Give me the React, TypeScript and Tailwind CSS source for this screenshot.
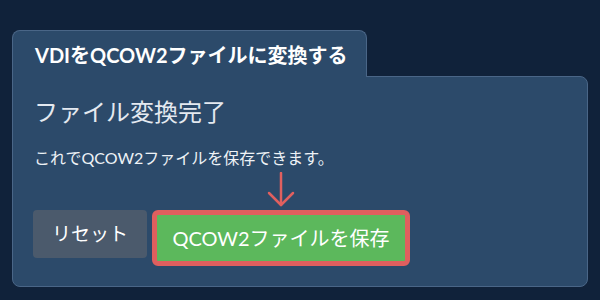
import React from "react";

const font = { fontFamily: 'Lato, "Noto Sans CJK JP", sans-serif' };

// Small red arrow pointing at the save button
function DownArrow() {
    return (
        <svg width="30" height="36" viewBox="0 0 30 36" fill="none">
            <path d="M15 1 V33" stroke="#e0605f" strokeWidth="2.5" strokeLinecap="round" />
            <path d="M3 21 L15 33 L27 21" stroke="#e0605f" strokeWidth="2.5" strokeLinecap="round" strokeLinejoin="round" />
        </svg>
    );
}

export default function App() {
    return (
        <div className="w-[600px] h-[300px] bg-[#10223a] pt-[30px] pl-[12px]" style={font}>
            <div className="w-[576px] flex flex-col">
                {/* Tab */}
                <div className="relative z-10 -mb-px w-[355px] h-[47px] rounded-t-lg border border-b-0 border-[#4a6687] bg-[#2c4a6a] pl-[22px] pt-[11px]">
                    <span className="text-[20px] font-bold text-white leading-[26px]">VDIをQCOW2ファイルに変換する</span>
                </div>

                {/* Panel */}
                <div className="h-[211px] rounded-b-lg rounded-tr-lg border border-[#4a6687] bg-[#2c4a6a] px-[20px] pt-[19px]">
                    <h2 className="pl-[1px] text-[24px] leading-[32px] font-normal text-[#e4e9f0]">ファイル変換完了</h2>
                    <p className="mt-[19px] pl-[1px] text-[16px] leading-[22px] text-[#eef2f6]">
                        これでQCOW2ファイルを保存できます。
                    </p>
                    <div className="mt-[41px] flex items-start gap-[5px]">
                        <button className="w-[114px] h-[48px] rounded bg-[#4b5a6c] text-[19px] text-white">
                            リセット
                        </button>
                        <div className="relative">
                            <div className="absolute left-1/2 -translate-x-1/2 -top-[38px]">
                                <DownArrow />
                            </div>
                            <button className="w-[258px] h-[56px] rounded-md border-[5px] border-[#df5f5e] bg-[#5cb85c] text-[20px] text-white">
                                QCOW2ファイルを保存
                            </button>
                        </div>
                    </div>
                </div>
            </div>
        </div>
    );
}
